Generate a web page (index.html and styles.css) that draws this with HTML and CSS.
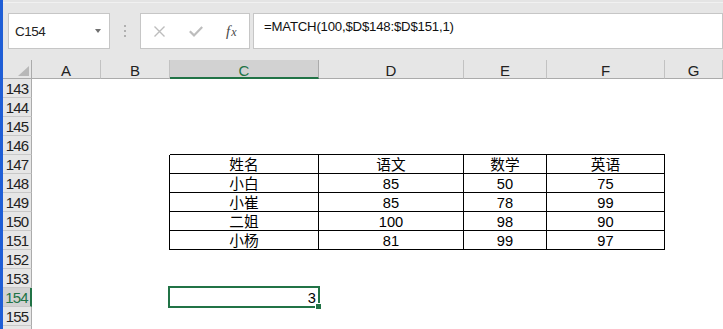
FILE: index.html
```html
<!DOCTYPE html>
<html lang="zh-CN">
<head>
<meta charset="utf-8">
<title>Excel MATCH</title>
<link rel="stylesheet" href="styles.css">
</head>
<body>
<div class="app">
  <div class="edge"></div>
  <div class="main">
    <div class="toolbar">
      <div class="namebox"><span class="ref">C154</span><span class="caret"></span></div>
      <div class="grip"><i></i><i></i><i></i></div>
      <div class="fxbox">
        <svg class="ic-x" width="11" height="11" viewBox="0 0 11 11"><path d="M0.5 0.5 L10.5 10.5 M10.5 0.5 L0.5 10.5" stroke="#bdbdbd" stroke-width="1.4" fill="none"/></svg>
        <svg class="ic-ok" width="14" height="11" viewBox="0 0 14 11"><path d="M0.8 5.2 L5 9.4 L13.2 1" stroke="#bdbdbd" stroke-width="2.2" fill="none"/></svg>
        <span class="fx"><span class="f">f</span><span class="x">x</span></span>
      </div>
      <div class="formula">=MATCH(100,$D$148:$D$151,1)</div>
    </div>
    <div class="sheet">
      <div class="corner"><svg width="11" height="10" viewBox="0 0 11 10"><polygon points="11,0 11,10 0,10" fill="#b8b8b8"/></svg></div>
      <div class="ch">A</div><div class="ch">B</div><div class="ch sel">C</div><div class="ch">D</div><div class="ch">E</div><div class="ch">F</div><div class="ch">G</div>

      <div class="rh">143</div><div class="c"></div><div class="c"></div><div class="c"></div><div class="c"></div><div class="c"></div><div class="c"></div><div class="c"></div>
      <div class="rh">144</div><div class="c"></div><div class="c"></div><div class="c"></div><div class="c"></div><div class="c"></div><div class="c"></div><div class="c"></div>
      <div class="rh">145</div><div class="c"></div><div class="c"></div><div class="c"></div><div class="c"></div><div class="c"></div><div class="c"></div><div class="c"></div>
      <div class="rh">146</div><div class="c"></div><div class="c"></div><div class="c tt"></div><div class="c tt"></div><div class="c tt"></div><div class="c tt"></div><div class="c"></div>

      <div class="rh">147</div><div class="c"></div><div class="c tl"></div><div class="c tc">姓名</div><div class="c tc">语文</div><div class="c tc">数学</div><div class="c tc">英语</div><div class="c"></div>
      <div class="rh">148</div><div class="c"></div><div class="c tl"></div><div class="c tc">小白</div><div class="c tc">85</div><div class="c tc">50</div><div class="c tc">75</div><div class="c"></div>
      <div class="rh">149</div><div class="c"></div><div class="c tl"></div><div class="c tc">小崔</div><div class="c tc">85</div><div class="c tc">78</div><div class="c tc">99</div><div class="c"></div>
      <div class="rh">150</div><div class="c"></div><div class="c tl"></div><div class="c tc">二姐</div><div class="c tc">100</div><div class="c tc">98</div><div class="c tc">90</div><div class="c"></div>
      <div class="rh">151</div><div class="c"></div><div class="c tl"></div><div class="c tc">小杨</div><div class="c tc">81</div><div class="c tc">99</div><div class="c tc">97</div><div class="c"></div>

      <div class="rh">152</div><div class="c"></div><div class="c"></div><div class="c"></div><div class="c"></div><div class="c"></div><div class="c"></div><div class="c"></div>
      <div class="rh">153</div><div class="c"></div><div class="c"></div><div class="c"></div><div class="c"></div><div class="c"></div><div class="c"></div><div class="c"></div>
      <div class="rh sel">154</div><div class="c"></div><div class="c"></div><div class="c num">3</div><div class="c"></div><div class="c"></div><div class="c"></div><div class="c"></div>
      <div class="rh">155</div><div class="c"></div><div class="c"></div><div class="c"></div><div class="c"></div><div class="c"></div><div class="c"></div><div class="c"></div>
      <div class="rh"></div><div class="c"></div><div class="c"></div><div class="c"></div><div class="c"></div><div class="c"></div><div class="c"></div><div class="c"></div>

      <div class="selection"><span class="handle"></span></div>
    </div>
  </div>
</div>
</body>
</html>
```
FILE: styles.css
```css
html, body {
  margin: 0;
  padding: 0;
  background: #e6e6e6;
}

.app {
  display: flex;
  width: 723px;
  height: 329px;
  overflow: hidden;
  background: #e6e6e6;
  font-family: "Liberation Sans", Arial, "Noto Sans CJK SC", sans-serif;
  color: #000;
}

.edge {
  flex: 0 0 3px;
  background: #1f5ed6;
}

.main {
  flex: 1;
  display: flex;
  flex-direction: column;
  min-width: 0;
}

/* ---------- toolbar ---------- */
.toolbar {
  flex: 0 0 60px;
  box-sizing: border-box;
  display: flex;
  align-items: flex-start;
  padding-top: 13px;
  background: linear-gradient(#e4e4e4 0 2px, #f1f1f1 2px 3px, #e6e6e6 3px);
}

.namebox {
  box-sizing: border-box;
  width: 102px;
  height: 36px;
  margin-left: 5px;
  background: #fff;
  border: 1px solid #c6c6c6;
  display: flex;
  align-items: center;
  justify-content: space-between;
  padding: 0 8px 0 6px;
}

.namebox .ref {
  font-size: 13.5px;
  line-height: 15px;
  letter-spacing: -0.5px;
  color: #222;
  padding-top: 1px;
}

.caret {
  width: 0;
  height: 0;
  border-left: 3px solid transparent;
  border-right: 3px solid transparent;
  border-top: 4px solid #707070;
}

.grip {
  width: 30px;
  height: 36px;
  display: flex;
  flex-direction: column;
  align-items: center;
  justify-content: center;
  gap: 3px;
}

.grip i {
  display: block;
  width: 2px;
  height: 2px;
  background: #b0b0b0;
}

.fxbox {
  box-sizing: border-box;
  width: 110px;
  height: 36px;
  background: #fff;
  border: 1px solid #c6c6c6;
  display: flex;
  align-items: center;
  padding-left: 13px;
}

.ic-x {
  display: block;
}

.ic-ok {
  display: block;
  margin-left: 24px;
}

.fx {
  margin-left: 23px;
  font-family: "Liberation Serif", "Times New Roman", serif;
  font-style: italic;
  color: #4a4a4a;
  display: flex;
  align-items: baseline;
}

.fx .f {
  font-size: 15px;
}

.fx .x {
  font-size: 12px;
  margin-left: 1px;
}

.formula {
  flex: 1;
  box-sizing: border-box;
  height: 36px;
  margin-left: 3px;
  background: #fff;
  border: 1px solid #c6c6c6;
  padding: 5px 0 0 10px;
  font-size: 13.2px;
  line-height: 16px;
  letter-spacing: -0.2px;
  color: #111;
  white-space: nowrap;
}

/* ---------- sheet ---------- */
.sheet {
  position: relative;
  flex: 1;
  display: grid;
  grid-template-columns: 29px 69px 69px 149px 145px 83px 118px 1fr;
  grid-auto-rows: 19px;
  background: #fff;
}

.corner {
  box-sizing: border-box;
  background: #e6e6e6;
  border-right: 1px solid #ababab;
  border-bottom: 1px solid #ababab;
  display: flex;
  justify-content: flex-end;
  align-items: flex-end;
  padding: 0 2px 2px 0;
}

.corner svg {
  display: block;
}

.ch {
  box-sizing: border-box;
  background: #e6e6e6;
  border-right: 1px solid #c2c2c2;
  border-bottom: 1px solid #ababab;
  text-align: center;
  font-size: 15px;
  line-height: 17px;
  padding-top: 2px;
  color: #222;
}

.ch.sel {
  background: #d2d2d2;
  color: #217346;
  border-bottom: 2px solid #217346;
  border-right-color: #ababab;
}

.rh {
  box-sizing: border-box;
  background: #e6e6e6;
  border-right: 1px solid #ababab;
  border-bottom: 1px solid #c8c8c8;
  text-align: center;
  font-size: 15px;
  line-height: 17px;
  padding-top: 1px;
  letter-spacing: -0.9px;
  color: #222;
}

.rh.sel {
  background: #d2d2d2;
  color: #217346;
  border-right: 2px solid #217346;
}

.c {
  box-sizing: border-box;
  font-size: 14.67px;
  line-height: 17px;
  padding-top: 2px;
  white-space: nowrap;
  overflow: hidden;
}

.tt {
  border-bottom: 1px solid #000;
}

.tl {
  border-right: 1px solid #000;
}

.tc {
  border-right: 1px solid #000;
  border-bottom: 1px solid #000;
  text-align: center;
}

.num {
  text-align: right;
  padding-right: 3px;
}

.selection {
  position: absolute;
  left: 165px;
  top: 226px;
  width: 152px;
  height: 22px;
  box-sizing: border-box;
  border: 2px solid #217346;
  pointer-events: none;
}

.handle {
  position: absolute;
  right: -3px;
  bottom: -3px;
  width: 6px;
  height: 6px;
  box-sizing: border-box;
  background: #217346;
  border: 1px solid #fff;
  border-width: 1px 0 0 1px;
}
```
